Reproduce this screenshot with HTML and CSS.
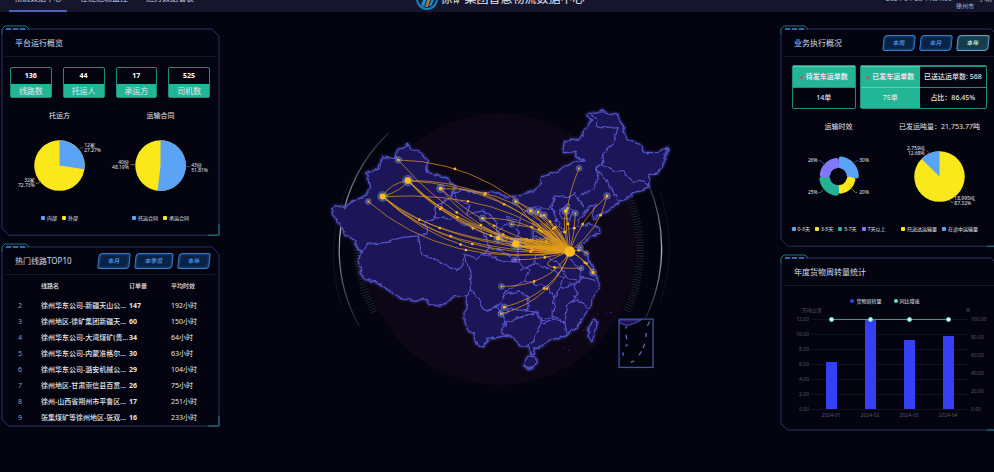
FILE: index.html
```html
<!DOCTYPE html>
<html lang="zh-CN">
<head>
    <meta charset="UTF-8">
    <title>徐矿集团智慧物流数据中心</title>
    <link rel="stylesheet" href="styles.css">
</head>
<body>
    <!-- 顶部导航 -->
    <header class="header">
        <nav class="nav">
            <a class="nav-item active" href="#">物流数据中心</a>
            <a class="nav-item" href="#">在途运输监控</a>
            <a class="nav-item" href="#">运力数据看板</a>
        </nav>
        <div class="brand">
            <svg class="logo" viewBox="0 0 22 22">
                <circle cx="11" cy="11" r="10" fill="#0b2239" stroke="#1583c4" stroke-width="2"/>
                <path d="M5 17 10 4h3L8 19z" fill="#1b8fd0"/>
                <path d="M9 19 13 6h3l-4 13z" fill="#a8743c"/>
                <path d="M13 18 17 8l1 4-3 6z" fill="#1b8fd0"/>
            </svg>
            <h1>徐矿集团智慧物流数据中心</h1>
        </div>
        <div class="info">
            <span class="clock">2024-04-28 11:31:00</span>
            <span class="city">徐州市</span>
            <span class="clock">小雨</span>
        </div>
    </header>

    <main class="screen">
        <!-- 左侧 -->
        <div class="column">
            <section class="panel">
                <svg class="frame" viewBox="0 0 217 207" preserveAspectRatio="none"><path d="M0 4V200L7 207H217V7L210 0H4"/><path class="corner" d="M206 207H217V196"/></svg>
                <svg class="tab" viewBox="0 0 30 10"><path d="M1 9V4L4 1H25L28 4"/><path class="dash" d="M5 4H24"/></svg>
                <div class="panel-head"><h2>平台运行概览</h2></div>
                <div class="stats">
                    <div class="stat"><b>136</b><span>线路数</span></div>
                    <div class="stat"><b>44</b><span>托运人</span></div>
                    <div class="stat"><b>17</b><span>承运方</span></div>
                    <div class="stat"><b>525</b><span>司机数</span></div>
                </div>
                <div class="charts">
                    <figure class="chart">
                        <figcaption>托运方</figcaption>
                        <svg viewBox="0 0 102 82">
                            <circle class="yellow" cx="51" cy="40" r="25.5"/>
                            <path class="blue" d="M51 40V14.500A25.500 25.500 0 0 1 76.200 43.600Z"/>
                            <path class="lead lead-blue" d="M70 24 73 22H75"/>
                            <path class="lead lead-yellow" d="M32 56 29 58H27"/>
                            <text x="76" y="21">12家</text><text x="76" y="26">27.27%</text>
                            <text class="end" x="26" y="57">32家</text><text class="end" x="26" y="62">72.73%</text>
                        </svg>
                        <div class="legend"><span class="key blue">内部</span><span class="key yellow">外部</span></div>
                    </figure>
                    <figure class="chart">
                        <figcaption>运输合同</figcaption>
                        <svg viewBox="0 0 102 82">
                            <circle class="yellow" cx="51" cy="40" r="25.5"/>
                            <path class="blue" d="M51 40V14.500A25.500 25.500 0 1 1 48.100 65.300Z"/>
                            <path class="lead lead-blue" d="M77 41H81"/>
                            <path class="lead lead-yellow" d="M25 39H21"/>
                            <text class="end" x="19" y="38">40份</text><text class="end" x="19" y="43">48.19%</text>
                            <text x="82" y="41">43份</text><text x="82" y="46">51.81%</text>
                        </svg>
                        <div class="legend"><span class="key blue">托运合同</span><span class="key yellow">承运合同</span></div>
                    </figure>
                </div>
            </section>

            <section class="panel">
                <svg class="frame" viewBox="0 0 217 178" preserveAspectRatio="none"><path d="M0 4V172L7 178H217V7L210 0H4"/><path class="corner" d="M206 178H217V168"/></svg>
                <svg class="tab" viewBox="0 0 30 10"><path d="M1 9V4L4 1H25L28 4"/><path class="dash" d="M5 4H24"/></svg>
                <div class="panel-head">
                    <h2>热门线路TOP10</h2>
                    <div class="buttons">
                        <button>本月</button>
                        <button class="wide">本季度</button>
                        <button>本年</button>
                    </div>
                </div>
                <table class="routes">
                    <thead>
                        <tr><th class="rank"></th><th class="name">线路名</th><th class="count">订单量</th><th>平均时效</th></tr>
                    </thead>
                    <tbody>
                        <tr><td class="rank">2</td><td class="name">徐州华东公司-新疆天山公...</td><td class="count">147</td><td>192小时</td></tr>
                        <tr><td class="rank">3</td><td class="name">徐州地区-徐矿集团新疆天...</td><td class="count">60</td><td>150小时</td></tr>
                        <tr><td class="rank">4</td><td class="name">徐州华东公司-大湾煤矿(贵...</td><td class="count">34</td><td>64小时</td></tr>
                        <tr><td class="rank">5</td><td class="name">徐州华东公司-内蒙准格尔...</td><td class="count">30</td><td>63小时</td></tr>
                        <tr><td class="rank">6</td><td class="name">徐州华东公司-潞安机械公...</td><td class="count">29</td><td>104小时</td></tr>
                        <tr><td class="rank">7</td><td class="name">徐州地区-甘肃崇信县百贯...</td><td class="count">26</td><td>75小时</td></tr>
                        <tr><td class="rank">8</td><td class="name">徐州-山西省朔州市平鲁区...</td><td class="count">17</td><td>251小时</td></tr>
                        <tr><td class="rank">9</td><td class="name">张集煤矿等徐州地区-张双...</td><td class="count">16</td><td>233小时</td></tr>
                    </tbody>
                </table>
            </section>
        </div>

        <!-- 中间地图 -->
        <div class="map-box">
            <svg class="map" viewBox="0 0 1080 900">
                <defs>
                    <filter id="rough" x="-5%" y="-5%" width="110%" height="110%">
                        <feTurbulence type="fractalNoise" baseFrequency="0.05" numOctaves="2" seed="4"/>
                        <feDisplacementMap in="SourceGraphic" scale="17" xChannelSelector="R" yChannelSelector="G" result="shifted"/>
                        <feOffset in="shifted" dx="0" dy="4" result="land"/>
                        <feGaussianBlur in="land" stdDeviation="5" result="glow"/>
                        <feMerge><feMergeNode in="glow"/><feMergeNode in="land"/></feMerge>
                    </filter>
                    <linearGradient id="arc" x1="0" y1="0" x2="0" y2="1">
                        <stop offset="0" stop-color="#777b82" stop-opacity=".3"/>
                        <stop offset=".5" stop-color="#b4b6ba"/>
                        <stop offset="1" stop-color="#777b82" stop-opacity=".2"/>
                    </linearGradient>
                </defs>
                <!-- 光环 -->
                <circle class="disc" cx="540" cy="478" r="408"/>
                <path class="halo" d="M205 130A483 483 0 0 0 118 710"/>
                <path class="halo" d="M985 280A483 483 0 0 1 975 690"/>
                <path class="halo faint" d="M90 275A505 505 0 0 0 65 650M1020 305A505 505 0 0 1 1020 640"/>
                <path class="ticks" d="M930 325A425 425 0 0 1 920 665M113 480A425 425 0 0 0 165 670"/>
                <!-- 省份 -->
                <g class="land" filter="url(#rough)">
                    <path class="country" d="M35 352 45 345 75 350 105 330 140 312 150 290 140 245 175 238 188 198 228 205 232 178 250 172 262 157 275 175 300 185 322 208 320 245 355 253 385 262 402 285 400 303 440 298 480 308 530 302 560 320 600 312 640 302 665 280 665 258 690 250 720 238 760 214 797 210 765 195 765 183 728 185 735 150 765 148 785 140 800 105 816 90 803 75 812 65 850 62 890 72 910 102 920 142 960 160 975 188 1010 188 1045 172 1035 205 1015 245 990 250 990 285 965 300 940 305 930 320 905 325 880 347 855 365 825 383 817 370 832 342 812 345 790 372 775 388 772 410 810 400 840 413 840 425 810 440 785 458 772 470 792 480 805 500 822 530 815 545 835 562 838 582 825 612 812 640 800 670 785 690 765 710 740 735 700 745 660 765 642 772 642 790 630 790 628 766 600 765 580 740 560 735 530 740 500 742 495 770 470 760 462 735 445 715 432 690 440 640 440 612 400 618 375 640 340 645 310 622 288 632 240 620 210 600 170 576 135 565 115 525 122 480 107 470 108 450 75 430 60 400 47 385Z"/>
                    <path d="M122 478 140 460 200 455 245 440 295 435 320 430 325 412 310 395 345 380 350 345 395 320 400 300"/>
                    <path d="M295 435 305 490 340 505 375 520 410 540 430 525 432 490 450 540 455 600 440 612"/>
                    <path d="M345 380 400 385 430 400 480 410 500 440 510 470 490 490 470 502 432 490"/>
                    <path d="M402 300 410 330 450 340 440 370 490 360 530 390 530 420 560 400 560 380 600 385 620 360 650 350 690 352 700 320"/>
                    <path d="M490 490 520 500 560 510 600 515 630 540 610 570 580 590 560 600 540 640 500 660 470 620 455 600"/>
                    <path d="M510 470 545 480 570 500M530 420 550 450 590 440 600 400 600 385M600 515 590 480 640 440 640 385M640 440 700 440 735 420"/>
                    <path d="M500 660 530 640 545 670 560 700 545 715 560 735M545 670 575 655 620 660 625 620 600 600 560 610"/>
                    <path d="M550 700 600 680 650 665 665 700 640 750 628 765"/>
                    <path d="M610 570 650 580 690 590 702 620 700 680 665 690 655 665 620 660"/>
                    <path d="M702 620 720 590 765 580 772 612 745 640 735 692 700 680M665 700 700 688 735 695 742 730"/>
                    <path d="M745 640 770 625 802 650M765 580 785 560 825 565M600 540 640 520 690 530 730 560 720 590"/>
                    <path d="M640 520 650 490 690 500 720 520 740 560 775 575 787 545 770 520 745 500 735 470 700 440"/>
                    <path d="M697 350 705 315 745 320 765 305 780 330 792 352M697 350 710 390 735 420 770 408M720 355 740 340 760 355 750 385 725 380Z"/>
                    <path d="M815 68 835 90 830 105 862 112 895 110 880 160 845 190 850 215 830 230 835 265 825 290 780 312"/>
                    <path d="M848 220 880 240 910 240 940 275 970 270 988 286M832 235 858 270 880 300 895 328"/>
                    <path class="country" d="M822 685 832 690 828 720 815 755 802 735 805 710Z"/>
                    <path class="country" d="M625 795 652 800 645 825 625 838 610 822Z"/>
                </g>
                <path class="islets" d="M733 775h2M746 782h3M790 722h2M823 752h2M832 672h2M858 670h2M872 668h3"/>
                <!-- 南海诸岛 -->
                <g class="sea">
                    <rect x="898" y="688" width="102" height="145"/>
                    <path class="shore" d="M900 690H965Q935 708 918 706L900 700Z"/>
                    <path d="M990 695 983 708M979 730V742M975 762 970 775M965 785 958 797M944 813 933 818M909 788 911 798M918 770 924 763M919 735 921 748M917 716 922 710"/>
                </g>
                <g id="lines"></g>
                <g id="cities"></g>
            </svg>
        </div>

        <!-- 右侧 -->
        <div class="column">
            <section class="panel">
                <svg class="frame" viewBox="0 0 217 217" preserveAspectRatio="none"><path d="M0 4V210L7 217H217V7L210 0H4"/><path class="corner" d="M206 217H217V206"/></svg>
                <svg class="tab" viewBox="0 0 30 10"><path d="M1 9V4L4 1H25L28 4"/><path class="dash" d="M5 4H24"/></svg>
                <div class="panel-head">
                    <h2>业务执行概况</h2>
                    <div class="buttons">
                        <button>本周</button>
                        <button>本月</button>
                        <button class="on">本年</button>
                    </div>
                </div>
                <div class="orders">
                    <div class="order">
                        <div class="cell fill dot">待发车运单数</div>
                        <div class="cell">14单</div>
                    </div>
                    <div class="order double">
                        <div class="cell fill dot">已发车运单数</div>
                        <div class="cell">已送达运单数: 568</div>
                        <div class="cell fill">75单</div>
                        <div class="cell">占比：86.45%</div>
                    </div>
                </div>
                <div class="charts">
                    <figure class="chart">
                        <figcaption>运输时效</figcaption>
                        <svg viewBox="0 0 102 82">
                            <g class="rose" transform="translate(51 40)">
                                <path class="blue" d="M2.600-17.800A18 18 0 0 1 18-.500L11-.500A11 11 0 0 0 2-10.800Z"/>
                                <path class="yellow" d="M14.500 3.600A15 15 0 0 1 2.100 14.900L1.500 11A11 11 0 0 0 10.700 2.700Z"/>
                                <path class="green" d="M-2 16.900A17 17 0 0 1-16.800 2.600L-11 2A11 11 0 0 0-2 10.900Z"/>
                                <path class="purple" d="M-16.500-1.900A16.500 16.500 0 0 1-2.400-16.300L-2-10.800A11 11 0 0 0-11-1.900Z"/>
                            </g>
                            <path class="lead lead-blue" d="M66 27 69 24H71"/>
                            <path class="lead lead-purple" d="M37 28 33 24H31"/>
                            <path class="lead lead-green" d="M36 52 33 56H31"/>
                            <path class="lead lead-yellow" d="M63 51 68 56H70"/>
                            <text class="end" x="30" y="25">26%</text><text x="72" y="25">30%</text>
                            <text class="end" x="30" y="58">25%</text><text x="72" y="58">20%</text>
                        </svg>
                        <div class="legend"><span class="key blue">0-3天</span><span class="key yellow">3-5天</span><span class="key green">5-7天</span><span class="key purple">7天以上</span></div>
                    </figure>
                    <figure class="chart">
                        <figcaption>已发运吨量：21,753.77吨</figcaption>
                        <svg viewBox="0 0 102 82">
                            <circle class="yellow" cx="51" cy="40" r="25.5"/>
                            <path class="blue" d="M51 40V14.500A25.500 25.500 0 0 0 32.800 22.200Z"/>
                            <path class="lead lead-blue" d="M41 16 38 14"/>
                            <path class="lead lead-yellow" d="M61 64 63 66H65"/>
                            <text class="end" x="36" y="13">2,759吨</text><text class="end" x="36" y="18">12.68%</text>
                            <text x="66" y="64">18,995吨</text><text x="66" y="69">87.32%</text>
                        </svg>
                        <div class="legend"><span class="key yellow">已送达运输量</span><span class="key blue">在途中运输量</span></div>
                    </figure>
                </div>
            </section>

            <section class="panel">
                <svg class="frame" viewBox="0 0 217 172" preserveAspectRatio="none"><path d="M0 4V166L7 172H217V7L210 0H4"/><path class="corner" d="M206 172H217V162"/></svg>
                <svg class="tab" viewBox="0 0 30 10"><path d="M1 9V4L4 1H25L28 4"/><path class="dash" d="M5 4H24"/></svg>
                <div class="panel-head"><h2>年度货物周转量统计</h2></div>
                <div class="legend bar-legend"><span class="key dark">货物周转量</span><span class="key mint">同比增速</span></div>
                <svg class="bars" viewBox="0 0 217 124">
                    <path class="grid" d="M30 13.500H187M30 28.500H187M30 43.500H187M30 58.500H187M30 73.500H187M30 88.500H187M30 103.500H187"/>
                    <path class="bar" d="M45 56h11v47h-11zM84 14h11v89h-11zM123 34h11v69h-11zM162 30h11v73h-11z"/>
                    <path class="trend" d="M50.500 13.500H167.500"/>
                    <g class="dots"><circle cx="50.500" cy="13.500" r="2"/><circle cx="89.500" cy="13.500" r="2"/><circle cx="128.500" cy="13.500" r="2"/><circle cx="167.500" cy="13.500" r="2"/></g>
                    <g class="axis">
                        <text x="21" y="6">万吨公里</text><text x="185" y="6">%</text>
                        <text class="end" x="28" y="15">12.00</text><text class="end" x="28" y="30">10.00</text><text class="end" x="28" y="45">8.00</text><text class="end" x="28" y="60">6.00</text><text class="end" x="28" y="75">4.00</text><text class="end" x="28" y="90">2.00</text><text class="end" x="28" y="105">0.00</text>
                        <text x="190" y="15">100.00</text><text x="190" y="33">80.00</text><text x="190" y="51">60.00</text><text x="190" y="69">40.00</text><text x="190" y="87">20.00</text><text x="190" y="105">0.00</text>
                        <text class="mid" x="50" y="111">2024-01</text><text class="mid" x="89" y="111">2024-02</text><text class="mid" x="128" y="111">2024-03</text><text class="mid" x="167" y="111">2024-04</text>
                    </g>
                </svg>
            </section>
        </div>
    </main>
    <script src="map.js"></script>
</body>
</html>
```

FILE: styles.css
```css
* {
    box-sizing: border-box;
}

body {
    margin: 0;
    background: #03040f;
    color: #e4e6ee;
    font-family: "Noto Sans", "Noto Sans CJK SC", sans-serif;
    font-size: 7px;
    line-height: 10px;
    overflow: hidden;
}

h1, h2, figure {
    margin: 0;
    font-weight: 400;
}

/* 顶部 */
.header {
    display: grid;
    grid-template-columns: 1fr auto 1fr;
    height: 36px;
    margin-top: -24px;
    padding: 0 2px 0 9px;
    background: #15152c;
}

.nav {
    display: flex;
    gap: 8px;
}

.nav-item {
    width: 58px;
    height: 36px;
    padding-top: 16px;
    border-bottom: 2px solid transparent;
    color: #c6c8dc;
    font-size: 8px;
    line-height: 12px;
    text-align: center;
    text-decoration: none;
}

.nav-item.active {
    border-color: #4964b4;
}

.brand {
    display: flex;
    align-items: center;
    gap: 2px;
    padding-top: 10px;
}

.logo {
    width: 22px;
    height: 22px;
}

.brand h1 {
    font-size: 12px;
    line-height: 16px;
}

.info {
    display: flex;
    justify-content: flex-end;
    gap: 4px;
    color: #b3b5c8;
}

.city {
    padding-top: 25px;
    font-size: 6px;
}

.clock {
    padding-top: 18px;
}

/* 主体三栏 */
.screen {
    display: grid;
    grid-template-columns: 217px 1fr 217px;
    padding: 17px 0 42px 2px;
    margin-right: -4px;
}

.column {
    display: flex;
    flex-direction: column;
    gap: 12px;
}

/* 面板 */
.panel {
    position: relative;
    padding: 0 8px 0 7px;
}

.frame {
    position: absolute;
    inset: 0;
    width: 100%;
    height: 100%;
    overflow: visible;
    pointer-events: none;
}

.frame path {
    fill: none;
    stroke: #2d3065;
    vector-effect: non-scaling-stroke;
}

.frame .corner {
    stroke: #1f7f8c;
}

.tab {
    position: absolute;
    left: -1px;
    top: -4px;
    width: 30px;
    height: 10px;
}

.tab path {
    fill: none;
    stroke: #1f7478;
}

.tab .dash {
    stroke: #3565a8;
    stroke-width: 2;
    stroke-dasharray: 5 2;
}

.panel-head {
    display: flex;
    align-items: center;
    justify-content: space-between;
    height: 28px;
    margin: 0 -4px;
    padding: 0 5px 0 10px;
    border-bottom: 1px solid #14162a;
}

.panel-head h2 {
    font-size: 8px;
    line-height: 12px;
    color: #cfdcea;
}

.buttons {
    display: flex;
    gap: 5px;
}

button {
    width: 32px;
    height: 16px;
    padding: 0;
    border: 1px solid #3a7cc8;
    border-radius: 4px 2px;
    background: #0a2344;
    box-shadow: inset 0 0 3px #2460a8;
    color: #4a9bf0;
    font: inherit;
    font-size: 6px;
    font-weight: 500;
    transform: skewX(-6deg);
}

button.wide {
    width: 38px;
}

button.on {
    border-color: #58a5b4;
    background: #173b48;
    color: #c9f2ee;
}

/* 统计卡片 */
.stats {
    display: grid;
    grid-template-columns: repeat(4, 1fr);
    gap: 11px;
    padding: 10px 1px 0;
}

.stat {
    display: flex;
    flex-direction: column;
    border: 1px solid #1d8f7c;
    border-radius: 2px;
    text-align: center;
}

.stat b {
    line-height: 16px;
    color: #fff;
}

.stat span {
    background: #22b596;
    font-size: 8px;
    line-height: 13px;
}

/* 饼图 */
.charts {
    display: grid;
    grid-template-columns: 1fr 1fr;
    padding: 13px 0 12px;
}

.chart {
    display: flex;
    flex-direction: column;
}

.chart figcaption {
    margin-bottom: 5px;
    text-align: center;
    white-space: nowrap;
}

.chart svg {
    width: 100%;
    overflow: visible;
}

svg text {
    fill: #e4e6ee;
    font-size: 5px;
}

svg .end {
    text-anchor: end;
}

svg .mid {
    text-anchor: middle;
}

svg .blue { fill: #5ba4f5; }
svg .yellow { fill: #fae81b; }
svg .green { fill: #25b192; }
svg .purple { fill: #8177fb; }

.lead { fill: none; }
.lead-blue { stroke: #2f5480; }
.lead-yellow { stroke: #827912; }
.lead-green { stroke: #1a7662; }
.lead-purple { stroke: #4b4693; }

.rose path {
    stroke-width: 5;
    stroke-linejoin: round;
}

.rose .blue { stroke: #5ba4f5; }
.rose .yellow { stroke: #fae81b; }
.rose .green { stroke: #25b192; }
.rose .purple { stroke: #8177fb; }

.legend {
    display: flex;
    justify-content: center;
    gap: 5px;
    margin-top: 6px;
    font-size: 5px;
    white-space: nowrap;
}

.key {
    display: flex;
    align-items: center;
    gap: 2px;
}

.key::before {
    content: "";
    width: 4px;
    height: 4px;
    border-radius: 1px;
    background: #5ba4f5;
}

.key.yellow::before { background: #fae81b; }
.key.green::before { background: #25b192; }
.key.purple::before { background: #8177fb; }
.key.dark::before { background: #3540f5; border-radius: 50%; }
.key.mint::before { background: #6fe3c6; border-radius: 50%; }

/* 热门线路 */
.routes {
    width: 100%;
    margin-top: 6px;
    border-collapse: collapse;
    table-layout: fixed;
    text-align: left;
    white-space: nowrap;
}

.routes th {
    height: 17px;
    padding: 0;
    font-size: 6px;
    font-weight: 500;
    vertical-align: top;
}

.routes td {
    height: 16px;
    padding: 0;
}

.routes .rank {
    width: 32px;
    padding-left: 9px;
    color: #9a9cab;
}

.routes .name {
    width: 88px;
    font-weight: 500;
}

.routes .count {
    width: 42px;
}

.routes td.count {
    font-weight: 700;
}

/* 运单 */
.orders {
    display: grid;
    grid-template-columns: 1fr 2fr;
    gap: 4px;
    padding: 8px 3px 0 4px;
}

.order {
    display: grid;
    border: 1px solid #1d8f7c;
    border-radius: 2px;
}

.order.double {
    grid-template-columns: 59px 1fr;
}

.cell {
    display: flex;
    align-items: center;
    justify-content: center;
    height: 21px;
    border-top: 1px solid #1d8f7c;
    font-weight: 500;
    white-space: nowrap;
}

.cell.fill {
    border-color: #5ccfb6;
    background: #22b596;
}

.cell.dot {
    gap: 3px;
    font-weight: 700;
}

.cell.dot::before {
    content: "";
    width: 3px;
    height: 3px;
    border-radius: 50%;
    background: #c0594e;
}

/* 柱状图 */
.bar-legend {
    gap: 12px;
    margin: 10px 8px 0 0;
}

.bars {
    display: block;
    width: 217px;
    margin: 0 -8px 0 -7px;
}

.bars .axis text {
    fill: #565967;
}

.grid {
    stroke: #12131f;
}

.bar {
    fill: #3540f5;
}

.trend {
    stroke: #3d9b83;
}

.dots circle {
    fill: #d8fff4;
    stroke: #6fe3c6;
}

/* 地图 */
.map-box {
    display: flex;
    justify-content: center;
    align-items: flex-start;
    padding-top: 61px;
}

.map {
    width: 64%;
    overflow: visible;
}

.disc {
    fill: #0d0616;
}

.halo {
    fill: none;
    stroke: url(#arc);
    stroke-width: 4;
}

.halo.faint {
    stroke: #11131d;
    stroke-width: 3;
}

.ticks {
    fill: none;
    stroke: #20212b;
    stroke-width: 24;
    stroke-dasharray: 3 5;
}

.land path {
    fill: none;
    stroke: #5052c4;
    stroke-width: 4;
    stroke-linejoin: round;
}

.land .country {
    fill: #1f1258;
}

.islets {
    stroke: #4648b4;
    stroke-width: 3;
}

.sea path, .sea rect {
    fill: none;
    stroke: #5569b0;
    stroke-width: 4;
}

.sea rect {
    stroke: #3d5299;
}

.sea .shore {
    fill: #1f1258;
    stroke: #3e459a;
}

#lines path {
    fill: none;
    stroke: #e09b18;
    stroke-width: 3;
    stroke-opacity: .7;
}

#lines circle, #cities .core {
    fill: #fdbb1c;
}

#cities .ring {
    fill: #8fa0e8;
    fill-opacity: .35;
    stroke: #8994d8;
    stroke-width: 2;
    stroke-opacity: .5;
}
```

FILE: map.js
```js
// 航线: 起点x, 起点y, 控制点x, 控制点y
const hub = [750, 485];
const routes = [
    [235, 210, 530, 215], [235, 210, 450, 460],
    [264, 272, 520, 265], [264, 272, 560, 290], [264, 272, 400, 420], [264, 272, 430, 440],
    [264, 272, 450, 470], [264, 272, 480, 480], [264, 272, 390, 430],
    [188, 320, 560, 300], [188, 320, 360, 490], [188, 320, 400, 510], [188, 320, 330, 450],
    [188, 320, 380, 470], [188, 320, 420, 540],
    [145, 335, 380, 540], [362, 296, 600, 290], [362, 296, 500, 470], [362, 296, 520, 440],
    [488, 385, 630, 380], [488, 385, 580, 480], [587, 335, 700, 380], [587, 335, 660, 440],
    [633, 363, 700, 400], [655, 366, 720, 410], [673, 376, 720, 420], [575, 403, 680, 410],
    [588, 462, 680, 435], [588, 462, 670, 500], [535, 445, 650, 440], [535, 445, 640, 510],
    [738, 363, 725, 420], [738, 363, 752, 430], [767, 370, 765, 430], [778, 235, 720, 370],
    [862, 318, 780, 390], [862, 318, 840, 420], [545, 590, 690, 590], [553, 652, 710, 610],
    [543, 673, 700, 630], [820, 548, 775, 490], [820, 548, 800, 510], [800, 490, 775, 475],
    [583, 510, 670, 510], [785, 535, 600, 540]
];
const cities = [
    [235, 210, 4], [264, 272, 10], [188, 320, 9], [145, 335, 3], [362, 296, 6], [488, 385, 4],
    [587, 335, 4], [633, 363, 5], [655, 366, 4], [673, 376, 4], [575, 403, 3], [588, 462, 11],
    [535, 445, 7], [738, 363, 6], [767, 370, 3], [778, 235, 3], [862, 318, 4], [545, 590, 3],
    [553, 652, 4], [543, 673, 3], [820, 548, 5], [783, 473, 2], [800, 490, 2], [785, 535, 2], [583, 510, 2]
];

function add(parent, tag, attrs) {
    const el = document.createElementNS('http://www.w3.org/2000/svg', tag);
    for (const key in attrs) el.setAttribute(key, attrs[key]);
    parent.appendChild(el);
}

const lines = document.getElementById('lines');
routes.forEach(([x, y, cx, cy], i) => {
    add(lines, 'path', { d: `M${x} ${y}Q${cx} ${cy} ${hub[0]} ${hub[1]}` });
    // 飞行点
    const t = 0.3 + (i % 4) * 0.08;
    const px = (1 - t) ** 2 * x + 2 * t * (1 - t) * cx + t * t * hub[0];
    const py = (1 - t) ** 2 * y + 2 * t * (1 - t) * cy + t * t * hub[1];
    add(lines, 'circle', { cx: px, cy: py, r: 4 });
});

// 汇入徐州的密集短线
for (let i = 0; i < 75; i++) {
    const x = 575 + (i * 37) % 135;
    const y = 400 + (i * 23) % 92;
    if (y < 440 && x < 640) continue;
    const cx = (x + hub[0]) / 2;
    const cy = (y + hub[1]) / 2 + (i % 5 - 2) * 7;
    add(lines, 'path', { d: `M${x} ${y}Q${cx} ${cy} ${hub[0]} ${hub[1]}` });
}
add(lines, 'path', { d: 'M264 272Q210 280 188 320M264 272Q250 300 188 320' });
add(lines, 'circle', { cx: hub[0], cy: hub[1], r: 16 });

const group = document.getElementById('cities');
cities.forEach(([x, y, r]) => {
    add(group, 'circle', { class: 'ring', cx: x, cy: y, r: r + 6 });
    add(group, 'circle', { class: 'core', cx: x, cy: y, r: r });
});
```
